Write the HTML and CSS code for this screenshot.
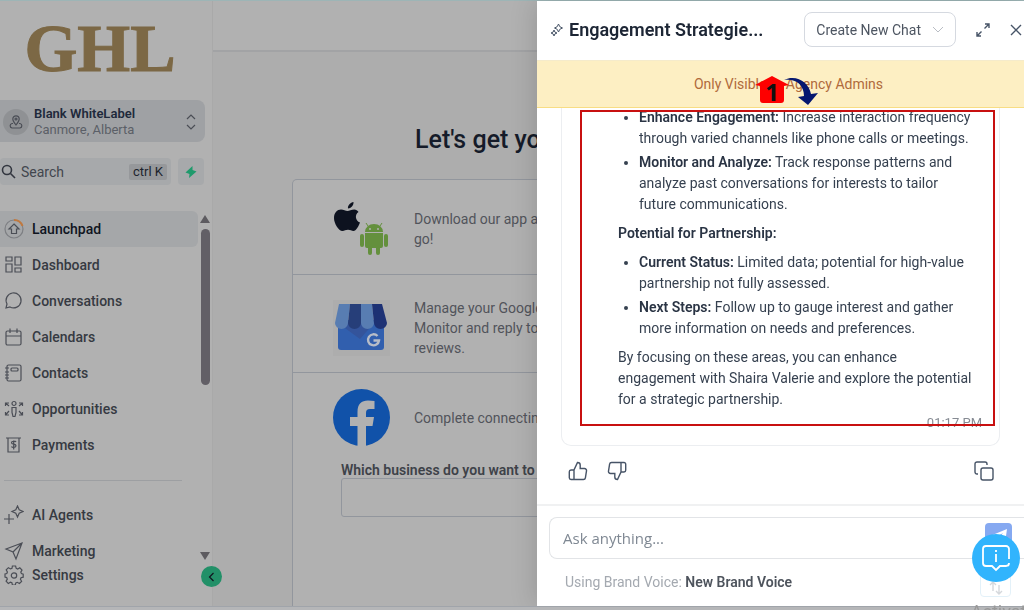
FILE: index.html
```html
<!DOCTYPE html>
<html lang="en">
<head>
    <meta charset="UTF-8">
    <meta name="viewport" content="width=device-width, initial-scale=1.0">
    <title>Launchpad</title>
    <link rel="stylesheet" href="styles.css">
</head>
<body>

<div class="app">
    <aside class="sidebar">
        <div class="logo">GHL</div>

        <button class="account">
            <span class="account-pin">
                <svg width="16" height="16" viewBox="0 0 16 16"><path d="M8 11C6 8.500 4.800 7 4.800 5a3.200 3.200 0 0 1 6.400 0c0 2-1.200 3.500-3.200 6z"/><circle cx="8" cy="5" r="1"/><path d="M5 9.500H4a2.300 2.300 0 0 0 0 4.500h8a2.300 2.300 0 0 0 0-4.500h-1"/></svg>
            </span>
            <span class="account-text">
                <strong>Blank WhiteLabel</strong>
                <span>Canmore, Alberta</span>
            </span>
            <svg width="12" height="18" viewBox="0 0 12 18"><path d="M2 6l4-4 4 4M2 12l4 4 4-4"/></svg>
        </button>

        <div class="search-row">
            <label class="search">
                <svg width="15" height="15" viewBox="0 0 15 15"><circle cx="6" cy="6" r="4.500"/><path d="M9.500 9.500l4.500 4.500"/></svg>
                <input type="text" placeholder="Search" aria-label="Search">
                <kbd>ctrl K</kbd>
            </label>
            <button class="quick" aria-label="Quick actions">
                <svg width="14" height="14" viewBox="0 0 14 14"><path d="M8.500 1L1.500 7.500 5.500 9 5 13l7.500-6.500L8.500 5z"/></svg>
            </button>
        </div>

        <div class="nav-wrap">
            <nav class="nav">
                <a href="#" class="active">
                    <svg width="20" height="20" viewBox="0 0 20 20"><circle class="ring" cx="10" cy="10" r="9"/><path class="ring-part" d="M10 1a9 9 0 0 1 8.500 6"/><path d="M10 5l5 5h-2.500v4.500h-5V10H5z"/></svg>
                    Launchpad</a>
                <a href="#">
                    <svg width="20" height="20" viewBox="0 0 20 20"><path d="M2 2h6v4H2zM11 2h6v8h-6zM2 9h6v8H2zM11 13h6v4h-6z"/></svg>
                    Dashboard</a>
                <a href="#">
                    <svg width="20" height="20" viewBox="0 0 20 20"><path d="M2 17l1-4a7.500 7.500 0 1 1 3 3z"/></svg>
                    Conversations</a>
                <a href="#">
                    <svg width="20" height="20" viewBox="0 0 20 20"><rect x="2" y="4" width="15" height="14" rx="1.500"/><path d="M2 9h15M6 1.500V6M13 1.500V6"/></svg>
                    Calendars</a>
                <a href="#">
                    <svg width="20" height="20" viewBox="0 0 20 20"><rect x="3" y="2" width="14" height="16" rx="1.500"/><rect x="7" y="5" width="7" height="3" rx="1"/><path d="M1 5h4M1 9h4M1 12h4M1 15h4"/></svg>
                    Contacts</a>
                <a href="#">
                    <svg width="20" height="20" viewBox="0 0 20 20"><circle cx="10" cy="4.500" r="2"/><path d="M8 8.500h4v5l-1 4H9l-1-4zM5 7L1.500 4M1.500 7V4H5M15 7l3.500-3M18.500 7V4H15M5 12l-3.500 4M1.500 13v3H5M15 12l3.500 4M18.500 13v3H15"/></svg>
                    Opportunities</a>
                <a href="#">
                    <svg width="20" height="20" viewBox="0 0 20 20"><path d="M2 3h15M4 3v14h11V3M12 7c-.500-1-4.500-1.300-4.500.800 0 2 4.500.800 4.500 3s-4 2-4.500.700M9.700 5.500v9"/></svg>
                    Payments</a>
                <hr>
                <a href="#">
                    <svg width="20" height="20" viewBox="0 0 20 20"><path d="M13.500 1l1.700 3.800L19 6.500l-3.800 1.700L13.500 12l-1.700-3.800L8 6.500l3.800-1.700zM5 9v10M0 14h10"/></svg>
                    AI Agents</a>
                <a href="#">
                    <svg width="20" height="20" viewBox="0 0 20 20"><path d="M18 2L2 8l7 3 3 7zM18 2L9 11"/></svg>
                    Marketing</a>
                <a href="#" class="settings">
                    <svg width="20" height="20" viewBox="0 0 20 20"><path d="M8.400 1h3.200l.600 2.400 1.500.600 2.100-1.200 2.200 2.200-1.200 2.100.600 1.500 1.800.500v3.100l-2.200.500-.600 1.500 1.200 2.100-2.200 2.200-2.100-1.200-1.500.600-.500 2.100H8.400l-.500-2.200-1.500-.600-2.100 1.200-2.200-2.200 1.200-2.100-.600-1.500L1 12V9l1.800-.500.600-1.500-1.200-2.100 2.200-2.200 2.100 1.200L8 3.300z"/><circle cx="10" cy="10.500" r="2.700"/></svg>
                    Settings</a>
            </nav>
            <div class="scrollbar">
                <svg width="12" height="8" viewBox="0 0 12 8"><path d="M6 0l5 8H1z"/></svg>
                <div class="thumb"></div>
                <svg width="12" height="8" viewBox="0 0 12 8"><path d="M1 0h10L6 8z"/></svg>
            </div>
        </div>
        <button class="collapse" aria-label="Collapse menu">
            <svg width="10" height="10" viewBox="0 0 10 10"><path d="M6.500 1l-4 4 4 4"/></svg>
        </button>
    </aside>

    <main class="main">
        <header class="topbar"></header>
        <h1>Let's get your</h1>
        <section class="steps">
            <div class="step step-app">
                <svg width="58" height="56" viewBox="0 0 58 56">
                    <path fill="#0d121f" d="M20.500 1c.300 3.500-2.500 6.500-5.500 6.500C14.500 4.500 17.500 1.300 20.500 1zM25.500 11c-4 2.500-3.300 8.700 1.500 10.500-1.200 3.500-4 8.500-6.500 8.500-2 0-3-1.200-5.500-1.200S11.500 30 9.500 30C5.500 30 1 22.500 1 17c0-5.500 3.300-8.500 7-8.500 2.600 0 4.500 1.500 6.500 1.500 1.700 0 4-1.600 6.800-1.600 1.700 0 3.300.900 4.200 2.600z"/>
                    <g fill="#64903d">
                        <path d="M32 31a9 8 0 0 1 18 0zM32 32h18v13a2 2 0 0 1-2 2h-1v5a2 2 0 0 1-4 0v-5h-4v5a2 2 0 0 1-4 0v-5h-1a2 2 0 0 1-2-2z"/>
                        <rect x="27" y="33" width="4" height="13" rx="2"/><rect x="51" y="33" width="4" height="13" rx="2"/>
                    </g>
                    <path stroke="#64903d" d="M35 25l-2-3M47 25l2-3"/>
                    <circle cx="37" cy="28" r="1" fill="#b1b1b1"/><circle cx="45" cy="28" r="1" fill="#b1b1b1"/>
                </svg>
                <p>Download our app and<br>go!</p>
            </div>
            <div class="step step-google">
                <svg width="58" height="56" viewBox="0 0 58 56">
                    <path fill="#adadad" d="M0 0h57v56H0z"/>
                    <path fill="#315fae" d="M5 20h46v27a3 3 0 0 1-3 3H8a3 3 0 0 1-3-3z"/>
                    <path fill="#34549b" d="M5 23h36l-14 16z"/>
                    <path fill="#587db2" d="M6 4h11l-2 19a6.500 6 0 0 1-13 0z"/>
                    <path fill="#263e79" d="M17 4h11v19a6.500 6 0 0 1-13 0z"/>
                    <path fill="#587db2" d="M28 4h11l2 19a6.500 6 0 0 1-13 0z"/>
                    <path fill="#1d3174" d="M39 4h10l5 19a6.500 6 0 0 1-13 0z"/>
                    <path fill="none" stroke="#b7bdc8" stroke-width="2.400" d="M44.500 36a5.500 5.500 0 1 0 1.500 4.500h-5.500"/>
                </svg>
                <p>Manage your Google<br>Monitor and reply to<br>reviews.</p>
            </div>
            <div class="step step-facebook">
                <svg width="58" height="58" viewBox="0 0 58 58">
                    <circle cx="28.500" cy="28.500" r="28.500" fill="#1152a9"/>
                    <path fill="#b1b1b1" d="M24.500 57V37H17v-9h7.500v-5c0-8 4-11.500 10.500-11.500 2.500 0 4.500.200 6.500.500V20H37c-3 0-4 1.500-4 4v4h8l-1.500 9H33v20z"/>
                </svg>
                <p>Complete connecting</p>
            </div>
            <div class="field">
                <label for="business">Which business do you want to</label>
                <input id="business" type="text">
            </div>
        </section>
    </main>
</div>

<div class="drawer">
    <header class="drawer-head">
        <svg width="14" height="14" viewBox="0 0 14 14"><path d="M8.500 1l1.300 2.700L12.500 5 9.800 6.300 8.500 9 7.200 6.300 4.500 5l2.700-1.300zM4 7l.900 2.100L7 10l-2.100.900L4 13l-.900-2.100L1 10l2.100-.900z"/></svg>
        <h2>Engagement Strategie...</h2>
        <button class="new-chat">Create New Chat
            <svg width="12" height="8" viewBox="0 0 12 8"><path d="M1 1l5 5 5-5"/></svg>
        </button>
        <button class="icon" aria-label="Expand">
            <svg width="14" height="14" viewBox="0 0 14 14"><path d="M8.500 5.500l4-4M9 1h4v4M5.500 8.500l-4 4M1 9v4h4"/></svg>
        </button>
        <button class="icon" aria-label="Close">
            <svg width="12" height="12" viewBox="0 0 12 12"><path d="M1 1l10 10M11 1L1 11"/></svg>
        </button>
    </header>

    <div class="notice">
        Only Visible to Agency Admins
        <svg class="marker" width="62" height="34" viewBox="0 0 62 34">
            <path fill="#fe0000" d="M17 2l17 9-5 1v14a3 3 0 0 1-3 3H8a3 3 0 0 1-3-3V12l-5-1z"/>
            <text x="17" y="27" text-anchor="middle">1</text>
            <path fill="#051770" d="M29 6c12-6 25 2 27 14l7-1-10 12-10-8 6-1C49 11 41 4 29 6z"/>
        </svg>
    </div>

    <div class="chat">
        <article class="message">
            <div class="answer">
                <ul>
                    <li><b>Enhance Engagement:</b> Increase interaction frequency through varied channels like phone calls or meetings.</li>
                    <li><b>Monitor and Analyze:</b> Track response patterns and analyze past conversations for interests to tailor future communications.</li>
                </ul>
                <p><b>Potential for Partnership:</b></p>
                <ul>
                    <li><b>Current Status:</b> Limited data; potential for high-value partnership not fully assessed.</li>
                    <li><b>Next Steps:</b> Follow up to gauge interest and gather more information on needs and preferences.</li>
                </ul>
                <p>By focusing on these areas, you can enhance engagement with Shaira Valerie and explore the potential for a strategic partnership.</p>
            </div>
            <time>01:17 PM</time>
            <div class="highlight"></div>
        </article>
        <div class="actions">
            <button class="icon" aria-label="Good answer">
                <svg width="20" height="20" viewBox="0 0 20 20"><path d="M6 18.500V9l3.500-7.500c1.700 0 2.700 1 2.700 2.500v3.500h4.300a2 2 0 0 1 2 2.300l-1.100 7a2 2 0 0 1-2 1.700H3a1.700 1.700 0 0 1-1.700-1.700v-6A1.800 1.800 0 0 1 3 9h3"/></svg>
            </button>
            <button class="icon" aria-label="Bad answer">
                <svg width="20" height="20" viewBox="0 0 20 20"><path d="M14 1.500V11l-3.500 7.500c-1.700 0-2.700-1-2.700-2.500v-3.500H3.500a2 2 0 0 1-2-2.300l1.100-7a2 2 0 0 1 2-1.700H17a1.700 1.700 0 0 1 1.700 1.700v6A1.800 1.800 0 0 1 17 11h-3"/></svg>
            </button>
            <button class="icon copy" aria-label="Copy">
                <svg width="20" height="20" viewBox="0 0 20 20"><rect x="7" y="7" width="12" height="12" rx="2"/><path d="M4 13H3a2 2 0 0 1-2-2V3a2 2 0 0 1 2-2h8a2 2 0 0 1 2 2v1"/></svg>
            </button>
        </div>
    </div>

    <footer class="composer">
        <div class="ask">
            <input type="text" placeholder="Ask anything..." aria-label="Ask anything">
            <button class="send" aria-label="Send">
                <svg width="20" height="18" viewBox="0 0 20 18"><path d="M18 1L1 8l5 2 8-5-5 7 1 5 3-3 3 1z"/></svg>
            </button>
        </div>
        <div class="voice">
            <p>Using Brand Voice: <b>New Brand Voice</b></p>
            <button class="swap" aria-label="Change voice">
                <svg width="14" height="14" viewBox="0 0 14 14"><path d="M4 10V1M1 4l3-3 3 3M10 4v9M7 10l3 3 3-3"/></svg>
            </button>
        </div>
    </footer>
    <button class="help" aria-label="Help">
        <svg width="28" height="28" viewBox="0 0 28 28"><path d="M27 15V5a3 3 0 0 0-3-3H4a3 3 0 0 0-3 3v14a3 3 0 0 0 3 3h6l4 4 4-4h6a3 3 0 0 0 3-3M14 10v8M14 6v2"/></svg>
    </button>
</div>

<div class="bottom-edge"><span>Activate</span></div>

</body>
</html>
```
FILE: styles.css
```css
* {
    box-sizing: border-box;
}
body {
    font-family: Roboto, Arial, sans-serif;
    font-size: 14px;
    margin: 0;
    height: 100vh;
    display: flex;
    flex-direction: column;
    overflow: hidden;
    background-color: #adadad;
    border-top: 1px solid #9db5b6;
}
button, input {
    font: inherit;
    color: inherit;
}
button {
    padding: 0;
    border: none;
    background: none;
    cursor: pointer;
}
svg {
    flex: none;
    fill: none;
}
p, h1, h2 {
    margin: 0;
}
.app {
    flex: 1;
    min-height: 0;
    display: flex;
}

/* sidebar */
.sidebar {
    position: relative;
    width: 213px;
    flex: none;
    display: flex;
    flex-direction: column;
    background-color: #b1b1b1;
    border-right: 1px solid #a9a9a9;
}
.sidebar svg {
    stroke: #4b4e56;
    stroke-width: 1.2;
}
.logo {
    height: 99px;
    padding: 11px 12px 0 0;
    font-family: "Liberation Serif", serif;
    font-size: 68px;
    line-height: 72px;
    font-weight: bold;
    text-align: center;
    color: #7c6845;
    -webkit-text-stroke: 1px #7c6845;
}
.account {
    height: 42px;
    margin-right: 7px;
    padding: 2px 8px 0 3px;
    display: flex;
    align-items: center;
    gap: 5px;
    border-radius: 0 8px 8px 0;
    background-color: #9fa1a4;
    text-align: left;
}
.account-pin {
    width: 26px;
    height: 26px;
    display: grid;
    place-items: center;
    border-radius: 50%;
    background-color: #8f9194;
}
.account-text {
    flex: 1;
    font-size: 13px;
    line-height: 16px;
    color: #5b5f67;
}
.account-text strong {
    display: block;
    font-weight: 600;
    color: #20293b;
}
.search-row {
    display: flex;
    gap: 7px;
    margin: 16px 8px 0 0;
}
.search {
    flex: 1;
    min-width: 0;
    height: 27px;
    padding: 0 4px 0 1px;
    display: flex;
    align-items: center;
    gap: 5px;
    border-radius: 4px;
    background-color: #a7a9ab;
}
.search input {
    flex: 1;
    min-width: 0;
    padding: 0;
    border: none;
    outline: none;
    background: none;
}
.search input::placeholder {
    color: #42464e;
    opacity: 1;
}
.search svg {
    stroke: #333740;
    stroke-width: 1.6;
}
kbd {
    padding: 0 4px;
    font-family: inherit;
    font-size: 13px;
    line-height: 16px;
    border-radius: 2px;
    background-color: #96989b;
    color: #20242e;
}
.quick {
    width: 26px;
    display: grid;
    place-items: center;
    border-radius: 4px;
    background-color: #a7a9ab;
}
.sidebar .quick svg {
    fill: #1f9a6c;
    stroke: none;
}
.nav-wrap {
    display: flex;
    margin-top: 26px;
}
.nav {
    flex: 1;
}
.nav a {
    height: 36px;
    padding-left: 4px;
    display: flex;
    align-items: center;
    gap: 8px;
    border-radius: 0 6px 6px 0;
    font-weight: 500;
    color: #363a42;
    text-decoration: none;
}
.nav a.active {
    background-color: #a5a7a9;
    color: #10151f;
}
.nav .ring {
    stroke: #7d7f83;
}
.nav .ring-part {
    stroke: #c0793f;
    stroke-width: 2;
}
.nav hr {
    margin: 17px 16px 16px 4px;
    border: none;
    border-top: 1px solid #9d9fa2;
}
.nav .settings {
    height: 12px;
}
.scrollbar {
    width: 14px;
    height: 345px;
    margin-top: 4px;
    display: flex;
    flex-direction: column;
    align-items: center;
    gap: 6px;
}
.sidebar .scrollbar svg {
    fill: #5d5b60;
    stroke: none;
}
.thumb {
    width: 9px;
    height: 156px;
    margin-bottom: auto;
    border-radius: 5px;
    background-color: #625f66;
}
.collapse {
    position: absolute;
    right: -10px;
    bottom: 19px;
    width: 21px;
    height: 21px;
    display: grid;
    place-items: center;
    border-radius: 50%;
    background-color: #229068;
}
.sidebar .collapse svg {
    stroke: #10151f;
}

/* launchpad page */
.main {
    flex: 1;
    min-width: 0;
    display: flex;
    flex-direction: column;
}
.topbar {
    height: 51px;
    flex: none;
    background-color: #b1b1b1;
    border-bottom: 2px solid #a2a3a5;
}
h1 {
    margin: 72px 0 23px;
    padding-left: 202px;
    font-size: 25px;
    line-height: 32px;
    font-weight: 500;
    color: #151b29;
}
.steps {
    flex: 1;
    margin: 0 79px;
    border: 1px solid #92969d;
    border-bottom: none;
    border-radius: 5px 5px 0 0;
    background-color: #b1b1b1;
    color: #51545b;
}
.step {
    display: flex;
    align-items: center;
    gap: 23px;
    padding: 0 40px;
    line-height: 20px;
}
.step-app {
    height: 95px;
    padding-top: 4px;
    border-bottom: 1px solid #92969d;
}
.step-google {
    height: 98px;
    padding-top: 9px;
    border-bottom: 1px solid #92969d;
}
.step-facebook {
    height: 89px;
}
.field {
    padding: 0 48px;
}
.field label {
    display: block;
    line-height: 16px;
    font-weight: 600;
    color: #3e4249;
}
.field input {
    width: 100%;
    height: 39px;
    border: 1px solid #92969d;
    border-radius: 3px;
    background: none;
}

/* chat drawer */
.drawer {
    position: fixed;
    top: 1px;
    right: 0;
    bottom: 4px;
    width: 487px;
    display: flex;
    flex-direction: column;
    background-color: #fff;
    color: #364150;
    box-shadow: -2px 0 24px rgba(0, 0, 0, 0.15);
}
.drawer svg {
    stroke: #475467;
    stroke-width: 1.4;
}
.drawer-head {
    height: 59px;
    flex: none;
    padding: 0 2px 2px 13px;
    display: flex;
    align-items: center;
}
.drawer-head h2 {
    flex: 1;
    padding-left: 5px;
    font-size: 18px;
    font-weight: 600;
    white-space: nowrap;
    color: #1d2635;
}
.drawer-head > svg {
    stroke-width: 1;
}
.new-chat {
    height: 35px;
    padding: 0 11px;
    display: flex;
    align-items: center;
    gap: 11px;
    border: 1px solid #d5d9e0;
    border-radius: 8px;
    color: #4d5561;
}
.new-chat svg {
    stroke: #b9bdc4;
    stroke-width: 1;
}
.icon {
    display: grid;
    place-items: center;
}
.drawer-head .icon {
    margin-left: 20px;
}
.notice {
    position: relative;
    height: 48px;
    flex: none;
    line-height: 46px;
    text-align: center;
    padding-left: 16px;
    background-color: #fdefc3;
    border-top: 1px solid #f5ebcb;
    border-bottom: 1px solid #f8dd84;
    color: #b06a3b;
}
.marker {
    position: absolute;
    left: 218px;
    top: 13px;
    overflow: visible;
}
.drawer .marker {
    stroke: none;
}
.marker text {
    font: bold 24px "Open Sans", sans-serif;
    fill: #111;
}
.chat {
    flex: 1;
    min-height: 0;
    padding: 0 24px;
    display: flex;
    flex-direction: column;
    justify-content: flex-end;
    overflow: hidden;
}
.message {
    position: relative;
    padding: 0 17px 14px 56px;
    border: 1px solid #eceef1;
    border-top: none;
    border-radius: 0 0 10px 10px;
}
.answer {
    padding-right: 8px;
    line-height: 21px;
}
.answer ul {
    margin: 0;
    padding-left: 21px;
}
.answer li {
    margin-bottom: 3px;
}
.answer p {
    margin: 8px 0;
}
.answer p:last-child {
    margin-bottom: 5px;
}
.answer b {
    font-weight: 600;
    color: #2a3444;
}
.message time {
    display: block;
    text-align: right;
    font-size: 13px;
    line-height: 16px;
    color: #868b93;
}
.highlight {
    position: absolute;
    top: 3px;
    right: 4px;
    bottom: 19px;
    left: 18px;
    border: 2px solid #c81010;
}
.actions {
    display: flex;
    gap: 19px;
    padding: 15px 6px 23px 7px;
}
.actions .copy {
    margin-left: auto;
}
.composer {
    flex: none;
    padding: 11px 0 9px 12px;
    border-top: 2px solid #f0f1f2;
}
.ask {
    height: 42px;
    padding: 0 12px 0 13px;
    display: flex;
    border: 1px solid #e2e4e7;
    border-right: none;
    border-radius: 8px 0 0 8px;
}
.ask input {
    flex: 1;
    padding: 0;
    border: none;
    outline: none;
    font-family: "Open Sans", sans-serif;
    font-size: 15px;
}
.ask input::placeholder {
    color: #7f8893;
    opacity: 1;
}
.send {
    width: 27px;
    height: 27px;
    margin-top: 5px;
    display: grid;
    place-items: center;
    border-radius: 4px;
    background-color: #86a9f1;
}
.drawer .send svg {
    fill: #fff;
    stroke: none;
}
.voice {
    display: flex;
    justify-content: space-between;
    padding: 8px 13px 0 16px;
    line-height: 30px;
    color: #a4a9b0;
}
.voice b {
    font-weight: 600;
    color: #4e545d;
}
.swap {
    width: 31px;
    height: 30px;
    padding-top: 12px;
    display: grid;
    place-items: center;
    border: 1px solid #e3f1f9;
    border-radius: 4px;
}
.drawer .swap svg {
    stroke: #d5d8dc;
}
.help {
    position: absolute;
    right: 4px;
    bottom: 24px;
    width: 48px;
    height: 48px;
    display: grid;
    place-items: center;
    border-radius: 50%;
    background-color: #31b4fd;
}
.drawer .help svg {
    stroke: #fff;
    stroke-width: 1.8;
}

.bottom-edge {
    position: relative;
    height: 4px;
    flex: none;
    border-top: 1px solid #a0a4aa;
    background-color: #b5b6b8;
}
.bottom-edge span {
    position: absolute;
    right: -12px;
    top: -6px;
    font-size: 18px;
    line-height: 22px;
    color: #999;
}
```
